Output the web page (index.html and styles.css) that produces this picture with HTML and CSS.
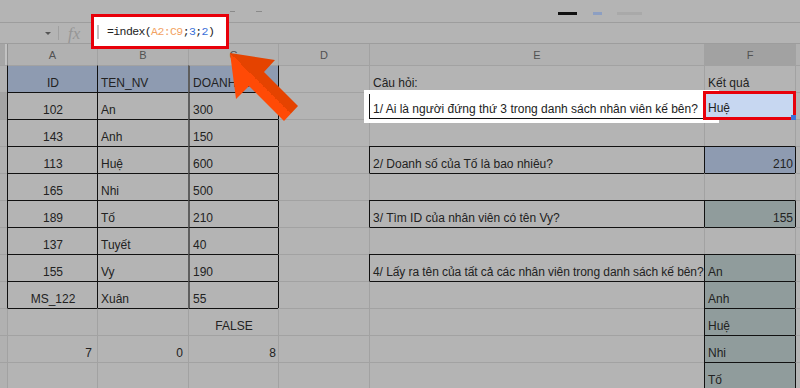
FILE: index.html
```html
<!DOCTYPE html>
<html lang="vi">
<head>
    <meta charset="UTF-8">
    <title>INDEX - Google Sheets</title>
    <link rel="stylesheet" href="styles.css">
</head>
<body>

    <!-- Toolbar -->
    <div class="toolbar">
        <span class="mark m1"></span>
        <span class="mark m2"></span>
        <span class="bar bar-black"></span>
        <span class="bar bar-blue"></span>
        <span class="bar bar-gray"></span>
    </div>

    <!-- Formula bar -->
    <div class="formula-bar">
        <div class="namebox"><span class="caret"></span></div>
        <span class="sep"></span>
        <span class="fx">fx</span>
        <div class="formula-box">
            <span class="cursor"></span>
            <span class="formula">=index(<span class="ref">A2:C9</span>;<span class="arg">3</span>;<span class="arg">2</span>)</span>
        </div>
    </div>

    <!-- Sheet -->
    <div class="sheet">
        <div class="corner"></div>
        <div class="ch first">A</div>
        <div class="ch">B</div>
        <div class="ch">C</div>
        <div class="ch">D</div>
        <div class="ch">E</div>
        <div class="ch sel">F</div>
        <div class="ch"></div>

        <!-- row 1 -->
        <div class="rh"></div>
        <div class="c hd bl mid">ID</div>
        <div class="c hd bl">TEN_NV</div>
        <div class="c hd cl">DOANH_SO</div>
        <div class="c bl"></div>
        <div class="c">Câu hỏi:</div>
        <div class="c">Kết quả</div>
        <div class="c"></div>

        <!-- row 2 -->
        <div class="rh sel"></div>
        <div class="c bl bt mid">102</div>
        <div class="c bl bt">An</div>
        <div class="c cl bt">300</div>
        <div class="c bl"></div>
        <div class="c bl bt q1">1/ Ai là người đứng thứ 3 trong danh sách nhân viên kế bên?</div>
        <div class="c active">Huệ</div>
        <div class="c"></div>

        <!-- row 3 -->
        <div class="rh"></div>
        <div class="c bl bt mid">143</div>
        <div class="c bl bt">Anh</div>
        <div class="c cl bt">150</div>
        <div class="c bl"></div>
        <div class="c bt"></div>
        <div class="c"></div>
        <div class="c"></div>

        <!-- row 4 -->
        <div class="rh"></div>
        <div class="c bl bt mid">113</div>
        <div class="c bl bt">Huệ</div>
        <div class="c cl bt">600</div>
        <div class="c bl"></div>
        <div class="c bl bt">2/ Doanh số của Tố là bao nhiêu?</div>
        <div class="c bl bt num blue">210</div>
        <div class="c bl"></div>

        <!-- row 5 -->
        <div class="rh"></div>
        <div class="c bl bt mid">165</div>
        <div class="c bl bt">Nhi</div>
        <div class="c cl bt">500</div>
        <div class="c bl"></div>
        <div class="c bt"></div>
        <div class="c bt"></div>
        <div class="c"></div>

        <!-- row 6 -->
        <div class="rh"></div>
        <div class="c bl bt mid">189</div>
        <div class="c bl bt">Tố</div>
        <div class="c cl bt">210</div>
        <div class="c bl"></div>
        <div class="c bl bt">3/ Tìm ID của nhân viên có tên Vy?</div>
        <div class="c bl bt num teal">155</div>
        <div class="c bl"></div>

        <!-- row 7 -->
        <div class="rh"></div>
        <div class="c bl bt mid">137</div>
        <div class="c bl bt">Tuyết</div>
        <div class="c cl bt">40</div>
        <div class="c bl"></div>
        <div class="c bt"></div>
        <div class="c bt"></div>
        <div class="c"></div>

        <!-- row 8 -->
        <div class="rh"></div>
        <div class="c bl bt mid">155</div>
        <div class="c bl bt">Vy</div>
        <div class="c cl bt">190</div>
        <div class="c bl"></div>
        <div class="c bl bt tight">4/ Lấy ra tên của tất cả các nhân viên trong danh sách kế bên?</div>
        <div class="c bl bt teal">An</div>
        <div class="c bl"></div>

        <!-- row 9 -->
        <div class="rh"></div>
        <div class="c bl bt mid">MS_122</div>
        <div class="c bl bt">Xuân</div>
        <div class="c cl bt">55</div>
        <div class="c bl"></div>
        <div class="c bt"></div>
        <div class="c bl bt teal">Anh</div>
        <div class="c bl"></div>

        <!-- row 10 -->
        <div class="rh"></div>
        <div class="c bt"></div>
        <div class="c bt"></div>
        <div class="c bt mid">FALSE</div>
        <div class="c"></div>
        <div class="c"></div>
        <div class="c bl bt teal">Huệ</div>
        <div class="c bl"></div>

        <!-- row 11 -->
        <div class="rh"></div>
        <div class="c num pr">7</div>
        <div class="c num pr">0</div>
        <div class="c num">8</div>
        <div class="c"></div>
        <div class="c"></div>
        <div class="c bl bt teal">Nhi</div>
        <div class="c bl"></div>

        <!-- row 12 -->
        <div class="rh"></div>
        <div class="c"></div>
        <div class="c"></div>
        <div class="c"></div>
        <div class="c"></div>
        <div class="c"></div>
        <div class="c bl bt teal">Tố</div>
        <div class="c bl"></div>
    </div>

    <!-- Arrow annotation -->
    <svg class="arrow" width="95" height="80" viewBox="0 0 95 80">
        <defs>
            <linearGradient id="shade" x1="0" y1="1" x2="1" y2="0">
                <stop offset="0.5" stop-color="#ff4a06"/>
                <stop offset="0.5" stop-color="#e54300"/>
            </linearGradient>
        </defs>
        <polygon points="5,5 50,12 39,24 73,58 59,73 24,38 11,51" fill="url(#shade)"/>
    </svg>

</body>
</html>
```

FILE: styles.css
```css
body {
    margin: 0;
    width: 800px;
    height: 388px;
    overflow: hidden;
    position: relative;
    background-color: #b4b4b4;
    font-family: "Liberation Sans", Arial, sans-serif;
    color: #222;
}

/* Toolbar */
.toolbar {
    height: 22px;
    box-sizing: border-box;
    padding-top: 11px;
    display: flex;
    align-items: flex-start;
}
.mark {
    height: 1px;
    background-color: #8a8a8a;
}
.m1 { margin-left: 230px; width: 5px; }
.m2 { margin-left: 21px; width: 6px; }
.bar {
    height: 3px;
    margin-top: 1px;
}
.bar-black { margin-left: 296px; width: 19px; background-color: #111; }
.bar-blue { margin-left: 16px; width: 9px; background-color: #8d9fc2; }
.bar-gray { margin-left: 15px; width: 25px; background-color: #a9a9a9; }

/* Formula bar */
.formula-bar {
    height: 22px;
    box-sizing: border-box;
    border-top: 1px solid #9d9d9d;
    border-bottom: 1px solid #9d9d9d;
    display: flex;
    align-items: center;
    position: relative;
}
.namebox {
    width: 58px;
    box-sizing: border-box;
    padding-right: 7px;
    display: flex;
    justify-content: flex-end;
}
.caret {
    width: 0;
    height: 0;
    border-left: 3px solid transparent;
    border-right: 3px solid transparent;
    border-top: 3px solid #555;
}
.sep {
    width: 1px;
    height: 14px;
    background-color: #a0a0a0;
}
.fx {
    margin-left: 9px;
    font-family: "Liberation Serif", serif;
    font-style: italic;
    font-size: 17px;
    color: #969696;
    line-height: 1;
}

/* red annotation box over the formula field */
.formula-box {
    position: absolute;
    left: 91px;
    top: -9px;
    width: 138px;
    height: 35px;
    box-sizing: border-box;
    border: 3px solid #e8000a;
    background-color: #fff;
    display: flex;
    align-items: center;
}
.cursor {
    width: 2px;
    height: 14px;
    margin-left: 3px;
    background-color: #c4c4c4;
}
.formula {
    margin-left: 8px;
    font-family: "Liberation Mono", monospace;
    font-size: 11.5px;
    letter-spacing: -0.6px;
    color: #222;
}
.ref { color: #f2a262; }
.arg { color: #3a6fd8; }

/* Sheet grid */
.sheet {
    display: grid;
    grid-template-columns: 7px 90px 91px 90px 91px 335px 91px 5px;
    grid-template-rows: 21px repeat(12, 27px);
}
.corner {
    background-color: #a6a6a6;
    border-right: 2px solid #c2c2c2;
}
.ch {
    border-left: 1px solid #a2a2a2;
    display: flex;
    align-items: center;
    justify-content: center;
    font-size: 11px;
    color: #525252;
    background-color: #b1b1b1;
}
.ch.first { border-left-color: #8f8f8f; }
.ch.sel { background-color: #a2a2a2; }
.rh {
    border-top: 1px solid #a2a2a2;
    background-color: #b1b1b1;
}
.rh.sel { background-color: #a4a4a4; }

.c {
    box-sizing: border-box;
    min-width: 0;
    border-left: 1px solid #a2a2a2;
    border-top: 1px solid #a2a2a2;
    padding: 0 2px 2px 3px;
    display: flex;
    align-items: flex-end;
    font-size: 12px;
    line-height: 14px;
    white-space: nowrap;
}
.mid { justify-content: center; }
.num { justify-content: flex-end; }
.pr { padding-right: 5px; }
.tight { letter-spacing: -0.07px; }

.bl { border-left-color: #111; }
.bt { border-top-color: #111; }
.cl { border-left: 2px solid #5e5e5e; }

.hd { background-color: #8e9bb1; }
.blue { background-color: #8e9bb1; }
.teal { background-color: #909c9c; }

/* question 1 highlight */
.q1 {
    position: relative;
    background-color: #fff;
    border-bottom: 1px solid #111;
}
.q1::before {
    content: "";
    position: absolute;
    top: -3px;
    left: -6px;
    right: -15px;
    bottom: -5px;
    border: 4px solid #fff;
    border-left-width: 5px;
}

/* selected result cell */
.active {
    position: relative;
    z-index: 2;
    background-color: #c7d7f1;
    border: 2px solid #3c73d9;
    outline: 3px solid #e8000a;
    outline-offset: -2px;
    padding-left: 2px;
}
.active::after {
    content: "";
    position: absolute;
    right: -3px;
    bottom: -3px;
    width: 5px;
    height: 5px;
    background-color: #3c73d9;
}

/* arrow annotation */
.arrow {
    position: absolute;
    left: 225px;
    top: 48px;
}
```
